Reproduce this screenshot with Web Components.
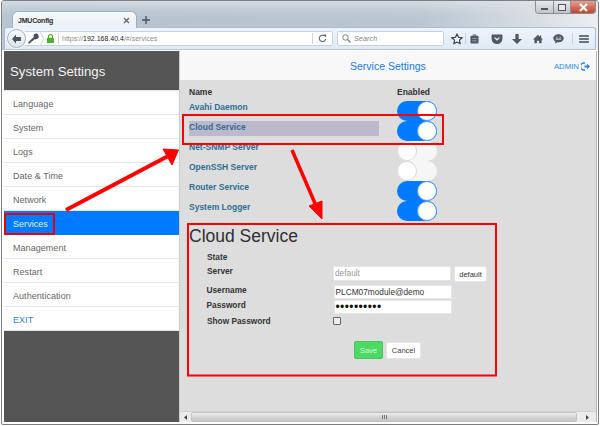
<!DOCTYPE html>
<html><head><meta charset="utf-8">
<style>
html,body{margin:0;padding:0;background:#fff;width:600px;height:426px;overflow:hidden;font-family:"Liberation Sans",Arial,sans-serif}
</style></head>
<body>
<browser-frame>
  <nav-sidebar slot="side" title-text="System Settings"></nav-sidebar>
  <page-bar slot="top" heading="Service Settings" user="ADMIN"></page-bar>
  <service-table slot="main"></service-table>
  <cloud-form slot="main"></cloud-form>
</browser-frame>
<script>
function def(name, css, html, init){
  customElements.define(name, class extends HTMLElement{
    constructor(){super();const r=this.attachShadow({mode:'open'});r.innerHTML='<style>'+css+'</style>'+(typeof html==='function'?html(this):html);}
    connectedCallback(){ if(init) init(this,this.shadowRoot); }
  });
}
def('win-controls',`:host{display:flex;height:12px;border:1px solid #8a8f96;border-top:0;border-radius:0 0 4px 4px;overflow:hidden;width:59px}
 div{display:flex;align-items:center;justify-content:center;background:linear-gradient(#e6e9ed,#bfc4ca)}
 .m{width:17px;border-right:1px solid #8a8f96}.x{width:16px;border-right:1px solid #8a8f96}.c{flex:1;background:linear-gradient(#e6a08f,#c8402f)}
 i{display:block}
 .m i{width:7px;height:2px;background:#fff;border:1px solid #555;box-sizing:border-box;margin-top:3px}
 .x i{width:8px;height:7px;border:1px solid #555;background:#e8e8e8;box-sizing:border-box}
 svg{width:9px;height:9px}`,
 `<div class="m"><i></i></div><div class="x"><i></i></div><div class="c"><svg viewBox="0 0 9 9"><path d="M1 1 8 8M8 1 1 8" stroke="#fff" stroke-width="2.2"/></svg></div>`);

def('tool-bar',`:host{display:flex;align-items:center;height:23px;box-sizing:border-box;margin:0 2px 0 2px;border:1px solid #a9c0d8;border-bottom:1px solid #b5c3d1;border-radius:3px 3px 0 0;background:linear-gradient(#eef4fb,#dfeaf6);position:relative}
 .back{width:19px;height:19px;border-radius:50%;border:1px solid #a7b3c0;background:linear-gradient(#f7f9fb,#dfe5ec);box-sizing:border-box;margin-left:2px;display:flex;align-items:center;justify-content:center;flex:none;box-shadow:0 0 0 1px #f4f7fa;position:relative;z-index:1}
 .urlbar{display:flex;align-items:center;width:308px;height:15px;flex:none;background:#fff;border:1px solid #c6d2de;border-left:0;border-radius:0 2px 2px 0;box-sizing:border-box;margin-left:-1px}
 .key{width:12px;flex:none;margin-left:3px;display:flex}
 .chev{width:5px;height:14px;flex:none}
 .lock{margin-left:2px;flex:none;display:flex}
 .sep{width:1px;height:11px;background:#cfd6dd;flex:none}
 .url{font:7px "Liberation Sans",Arial,sans-serif;color:#8a8f94;margin-left:3px;flex:1;white-space:nowrap;letter-spacing:0}
 .url b{font-weight:400;color:#222}
 .reload{width:19px;flex:none;display:flex;align-items:center;justify-content:center;height:11px;border-left:1px solid #cfd6dd}
 .search{width:107px;height:15px;margin-left:4px;flex:none;background:#fff;border:1px solid #c6d2de;border-radius:2px;box-sizing:border-box;display:flex;align-items:center;gap:3px;padding-left:4px;font:italic 7px "Liberation Sans",Arial,sans-serif;color:#7b7f84;letter-spacing:.2px}
 .icons{display:flex;align-items:center;margin-left:5px;flex:1}
 .ic{display:flex;align-items:center;justify-content:center;flex:none}
 .ic svg{display:block}
 .vs{width:1px;height:11px;background:#c9d3dd;flex:none}`,
 `<div class="back"><svg width="11" height="10" viewBox="0 0 11 10"><path d="M5 .5 1 5l4 4.5V7h5V3H5z" fill="#4a5560"/></svg></div>
 <div class="urlbar">
  <div class="key"><svg width="11" height="11" viewBox="0 0 13 13"><path d="M12.500 3.200a3 3 0 0 0-5.400-1.300c-.6 1-.6 2-.3 2.900L.6 10.600.4 12.600l2.200-.2L3 11l1.200-.2.2-1.200 1.200-.2 1.800-2a3.200 3.200 0 0 0 2.800-.3 3 3 0 0 0 2.300-3.900z" fill="#4b5158"/></svg></div>
  <svg class="chev" viewBox="0 0 5 14"><path d="M0 0 4 7 0 14" fill="none" stroke="#c6d2de"/></svg>
  <div class="lock"><svg width="7" height="9" viewBox="0 0 7 9"><path d="M1.500 4V2.600a2 2 0 0 1 4 0V4" fill="none" stroke="#58a632" stroke-width="1.100"/><rect x="0" y="3.800" width="7" height="5.200" rx=".6" fill="#4fae2e"/></svg></div>
  <div class="sep" style="margin-left:4px"></div>
  <div class="url">https://<b>192.168.40.4</b>/#/services</div>
  <div class="reload"><svg width="9" height="9" viewBox="0 0 9 9"><path d="M7.600 5.200A3.200 3.200 0 1 1 6.600 2" fill="none" stroke="#5b6a78" stroke-width="1.100"/><path d="M5.200 .4h3v3z" fill="#5b6a78"/></svg></div>
 </div>
 <div class="search"><svg width="9" height="9" viewBox="0 0 9 9"><circle cx="3.500" cy="3.500" r="2.700" fill="none" stroke="#77808a" stroke-width="1"/><path d="M5.500 5.500 8.500 8.500" stroke="#77808a" stroke-width="1.300"/></svg>Search</div>
 <div class="icons">
  <div class="ic" style="width:15px"><svg width="12" height="12" viewBox="0 0 12 12"><path d="M6 .9 7.500 4.300l3.700.4-2.800 2.400.8 3.700L6 8.900l-3.200 1.900.8-3.700L.8 4.700l3.700-.4z" fill="#fff" stroke="#39434d" stroke-width="1.200" stroke-linejoin="round"/></svg></div>
  <div class="vs" style="margin-left:1px"></div>
  <div class="ic" style="width:17px"><svg width="9" height="10" viewBox="0 0 10 11"><path d="M3.500 2V1h3v1" fill="none" stroke="#4b5560"/><rect x=".5" y="2" width="9" height="8.500" rx="1" fill="#4f5b66"/><path d="M2.500 5h5M2.500 7.500h5" stroke="#aab4bd" stroke-width=".8"/></svg></div>
  <div class="ic" style="width:20px;margin-left:4px"><svg width="12" height="10" viewBox="0 0 13 11"><path d="M.5 1.600C.5.900 1 .5 1.600.5h9.800c.6 0 1.100.4 1.100 1.100V5a6 6 0 0 1-12 0z" fill="#4d5963"/><path d="M3.800 4 6.500 6.400 9.200 4" fill="none" stroke="#e7eef6" stroke-width="1.400"/></svg></div>
  <div class="ic" style="width:20px"><svg width="10" height="10" viewBox="0 0 11 11"><path d="M3.700 0h3.600v5.500H11L5.500 11 0 5.500h3.700z" fill="#4d5963"/></svg></div>
  <div class="ic" style="width:20px;margin-left:1px"><svg width="10" height="10" viewBox="0 0 12 11"><path d="M6 .5 0 6h1.700v4.700h3V7.500h2.600v3.200h3V6H12L9.800 4V1.300H8.400v1.400z" fill="#4d5963"/></svg></div>
  <div class="ic" style="width:20px"><svg width="11" height="10" viewBox="0 0 12 11"><path d="M6 .3C2.800.3.300 2.200.3 4.800c0 1.600 1 2.900 2.300 3.700L2.200 10.700 4.800 9.200c.4.100.8.100 1.200.1 3.200 0 5.700-2 5.700-4.500S9.200.3 6 .3z" fill="#4d5963"/><path d="M3 5.600h6" stroke="#dfeaf6" stroke-width="1.100"/><path d="M3.500 3.500h1.200M7.300 3.500h1.200" stroke="#dfeaf6" stroke-width="1.100"/></svg></div>
  <div class="vs" style="margin-left:4px"></div>
  <div class="ic" style="width:21px"><svg width="10" height="8" viewBox="0 0 11 9"><path d="M0 1h11M0 4.500h11M0 8h11" stroke="#3f4a55" stroke-width="1.700"/></svg></div>
 </div>`);

def('browser-frame',`:host{display:block;width:600px;height:426px;box-sizing:border-box;overflow:hidden;position:relative;background:#fff;padding:0 1px 1px 1px}
 .win{display:flex;flex-direction:column;height:100%;box-sizing:border-box;border:1px solid #7b8085;border-radius:3px 3px 2px 2px;overflow:hidden;background:#fff}
 .chrome{flex:none;height:49px;background:linear-gradient(90deg,#b6c4d0 0,#b9c6d2 70%,#d9dee3 90%,#eceef0 100%);display:flex;flex-direction:column;position:relative;box-shadow:inset 0 12px 14px -8px #dfe4e8}
 .tabs{height:26px;flex:none;display:flex;align-items:flex-end;padding-left:10px;position:relative;box-sizing:border-box}
 .tab{width:125px;height:17px;box-sizing:border-box;border:1px solid #9fb0bf;border-bottom:0;border-radius:6px 6px 0 0;background:linear-gradient(#f7f9fb,#eaf1f8);display:flex;align-items:center;font:bold 7px "Liberation Sans",Arial,sans-serif;color:#2b2b2b;padding-left:5px;margin-bottom:-1px;z-index:1;letter-spacing:-.2px}
 .tab span{flex:1}
 .tab svg{margin-right:6px}
 .plus{margin-left:3px;height:15px;width:12px;display:flex;align-items:center;justify-content:center}
 win-controls{position:absolute;right:2px;top:0}
 .body{flex:1;display:flex;margin:1px 1px 2px 2px;min-height:0;background:#ddd;border-right:1px solid #b8b8b8}
 .side{width:176px;flex:none;display:flex;flex-direction:column}
 .right{flex:1;display:flex;flex-direction:column;min-width:0}
 .main{flex:1;min-height:0;background:#ddd;position:relative}
 anno-layer{position:absolute;left:0;top:0}`,
 `<div class="win"><div class="chrome"><div class="tabs"><div class="tab"><span>JMUConfig</span><svg width="7" height="7" viewBox="0 0 7 7"><path d="M1 1 6 6M6 1 1 6" stroke="#666" stroke-width="1.300"/></svg></div><div class="plus"><svg width="8" height="8" viewBox="0 0 9 9"><path d="M4.500 0v9M0 4.500h9" stroke="#46525e" stroke-width="1.500"/></svg></div></div><tool-bar></tool-bar><win-controls></win-controls></div>
 <div class="body"><div class="side"><slot name="side"></slot></div><div class="right"><slot name="top"></slot><div class="main"><slot name="main"></slot></div><fake-scroll></fake-scroll></div></div></div>
 <anno-layer></anno-layer>`);

def('fake-scroll',`:host{display:flex;flex:none;height:11px;background:#e9e9e9;border-top:1px solid #d0d0d0;box-sizing:border-box;align-items:stretch}
 .b{width:10px;flex:none;display:flex;align-items:center;justify-content:center;background:#ececec}
 .t{flex:1;margin:0 1px;border:1px solid #c3c3c3;border-radius:2px;background:linear-gradient(#ededed,#d3d3d3 55%,#c6c6c6);display:flex;align-items:center;justify-content:center}
 .t svg{display:block}
 .e{width:18px}`,
 `<div class="b"><svg width="3" height="5" viewBox="0 0 3 5"><path d="M3 0v5L0 2.500z" fill="#444"/></svg></div><div class="t"><svg width="5" height="4" viewBox="0 0 5 4"><path d="M.5 0v4M2.500 0v4M4.500 0v4" stroke="#777"/></svg></div><div class="b e"><svg width="3" height="5" viewBox="0 0 3 5"><path d="M0 0v5l3-2.500z" fill="#444"/></svg></div>`);

def('nav-item',`:host{display:flex;align-items:center;height:24px;box-sizing:border-box;padding:2px 0 0 9px;font:9px "Liberation Sans",Arial,sans-serif;color:#666;background:#fff;border-bottom:1px solid #e4e4e4;letter-spacing:.05px}
 :host([active]){background:#007bff;color:#e6f0ff;border-bottom-color:#007bff}
 :host([link]){color:#2f80ee}`,`<slot></slot>`);

def('nav-sidebar',`:host{display:flex;flex-direction:column;flex:1;background:#555;border-right:1px solid #ccc;box-sizing:border-box}
 .h{height:40px;flex:none;background:#555;color:#f2f2f2;font:13.200px "Liberation Sans",Arial,sans-serif;display:flex;align-items:center;padding:2px 0 0 6px;box-sizing:border-box;border-bottom:1px solid #e5e5e5;letter-spacing:0}
 .list{flex:none;background:#fff}`,
 h=>`<div class="h">${h.getAttribute('title-text')}</div><div class="list">${['Language','System','Logs','Date &amp; Time','Network','Services','Management','Restart','Authentication','EXIT'].map(t=>`<nav-item${t==='Services'?' active':''}${t==='EXIT'?' link':''}>${t}</nav-item>`).join('')}</div>`);

def('page-bar',`:host{display:flex;flex:none;height:29px;background:#f8f8f8;align-items:center;position:relative;box-sizing:border-box;padding:1px 0 0 170px;color:#1a7be8}
 .t{font:10.500px "Liberation Sans",Arial,sans-serif;letter-spacing:0}
 .u{margin-left:auto;margin-right:6px;display:flex;align-items:center;gap:2px;font:7.800px "Liberation Sans",Arial,sans-serif;color:#2f86ee}`,
 h=>`<div class="t">${h.getAttribute('heading')}</div><div class="u">${h.getAttribute('user')}<svg width="9" height="9" viewBox="0 0 9 9"><path d="M4 1H3a2.700 2.700 0 0 0 0 7h1" fill="none" stroke="#2f86ee" stroke-width="1.400"/><path d="M3.500 3.400h2.500V1.800L9 4.500 6 7.200V5.600H3.500z" fill="#2f86ee"/></svg></div>`);

def('toggle-switch',`:host{display:block;width:40px;height:20px;border-radius:10px;box-sizing:border-box;background:#f6f6f6;position:relative;flex:none}
 :host([on]){background:#007bff}
 i{position:absolute;top:0;left:0;width:20px;height:20px;border-radius:50%;background:#fff;box-sizing:border-box;border:1px solid #d8d8d8}
 :host([on]) i{left:auto;right:0;border:1px solid #4d9dff}`,`<i></i>`);

def('service-row',`:host{display:flex;height:20px;font:bold 8.500px "Liberation Sans",Arial,sans-serif;color:#2f6f94;letter-spacing:0}
 .n{width:208px;flex:none;padding-left:9px;box-sizing:content-box;height:15px;line-height:12px}
 .n span{display:block;width:190px;height:15px;box-sizing:border-box}
 :host([sel]) .n span{background:#bbb9cb}`,
 h=>`<div class="n"><span><slot></slot></span></div><toggle-switch ${h.hasAttribute('on')?'on':''}></toggle-switch>`);

def('service-table',`:host{display:block;padding-top:7px}
 .head{display:flex;height:14px;font:bold 8.500px "Liberation Sans",Arial,sans-serif;color:#333;letter-spacing:0;line-height:10px}
 .head div:first-child{width:208px;padding-left:9px;box-sizing:content-box}
 `,
 `<div class="head"><div>Name</div><div>Enabled</div></div>
 <service-row on>Avahi Daemon</service-row>
 <service-row on sel>Cloud Service</service-row>
 <service-row>Net-SNMP Server</service-row>
 <service-row>OpenSSH Server</service-row>
 <service-row on>Router Service</service-row>
 <service-row on>System Logger</service-row>`);

def('cloud-form',`:host{display:block;padding:5px 0 0 9px;color:#333}
 h2{margin:0;font:400 17.500px/20px "Liberation Sans",Arial,sans-serif;color:#2f2f2f;height:21px}
 .row{display:flex;align-items:flex-start;margin-left:18px;font:bold 8.300px/11px "Liberation Sans",Arial,sans-serif;letter-spacing:0}
 .l{width:126px;flex:none}
 .in{width:118px;height:14px;box-sizing:border-box;background:#fff;border:1px solid #e6e6e6;padding-left:1px;font:400 8.300px/12px "Liberation Sans",Arial,sans-serif;letter-spacing:0;color:#333;overflow:hidden;white-space:nowrap}
 .btn{font:400 7.500px "Liberation Sans",Arial,sans-serif;letter-spacing:0;background:#fff;border:1px solid #e6e6e6;border-radius:2px;display:flex;align-items:center;justify-content:center;box-sizing:border-box;color:#333}
 .cb{width:8px;height:8px;box-sizing:border-box;border:1px solid #666;background:#eee;border-radius:1px;margin-top:1px}
 .acts{display:flex;gap:3px;padding-left:165px;margin-top:15px;align-items:flex-start}
 .save{width:29px;height:18px;background:#4cd964;color:#d9f7df;border-color:#43c85a}
 .cancel{width:35px;height:17px;margin-top:1px;color:#444}`,
 `<h2>Cloud Service</h2>
 <div class="row" style="height:15px;margin-top:5px"><div class="l">State</div></div>
 <div class="row" style="height:18px"><div class="l" style="margin-top:-1px">Server</div><div class="in" style="height:15px;color:#999;margin-top:-1px;padding-left:1px">default</div><div class="btn" style="width:33px;height:16px;margin-left:3px;margin-top:-1px">default</div></div>
 <div class="row" style="height:15px;margin-left:17.500px"><div class="l" style="width:127px">Username</div><div class="in">PLCM07module@demo</div></div>
 <div class="row" style="height:16px;margin-left:17.500px"><div class="l" style="width:127px">Password</div><div class="in" style="letter-spacing:.4px;font-size:12px;line-height:13px;color:#111;font-weight:400">••••••••••</div></div>
 <div class="row" style="height:10px"><div class="l">Show Password</div><div class="cb"></div></div>
 <div class="acts"><div class="btn save">Save</div><div class="btn cancel">Cancel</div></div>`);

def('anno-layer',`:host{display:block;width:600px;height:426px;pointer-events:none}
 svg{display:block}`,
 `<svg width="600" height="426" viewBox="0 0 600 426" fill="none">
  <rect x="5" y="214" width="49" height="20" stroke="#e8000b" stroke-width="2"/>
  <rect x="183" y="115" width="260" height="29" stroke="#f00" stroke-width="2"/>
  <rect x="188" y="224" width="308" height="151.500" stroke="#f00" stroke-width="2"/>
  <path d="M66 210 172 154" stroke="#f00" stroke-width="4"/>
  <path d="M178.500 150 163 149l9 16z" fill="#f00" stroke="#f00" stroke-width="1"/>
  <path d="M292 150 317 208" stroke="#f00" stroke-width="3.500"/>
  <path d="M322 219 309 206 322 201z" fill="#f00" stroke="#f00" stroke-width="1"/>
 </svg>`);
</script>
</body></html>
